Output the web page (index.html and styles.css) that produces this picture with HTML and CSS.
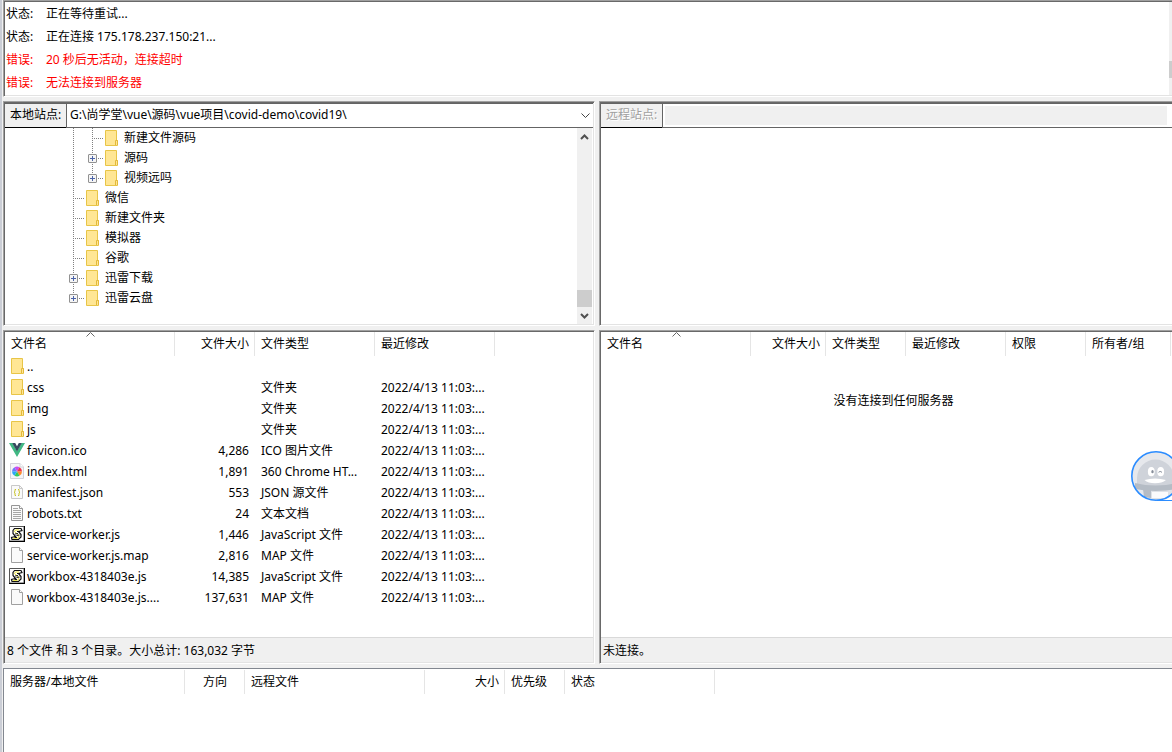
FILE: index.html
```html
<!DOCTYPE html>
<html lang="zh-CN">

<head>
  <meta charset="UTF-8">
  <meta name="viewport" content="width=device-width, initial-scale=1.0">
  <title>FTP</title>
  <link rel="stylesheet" href="styles.css">
</head>

<body>
  <!-- shared icons -->
  <svg class="sprite" aria-hidden="true">
    <symbol id="folder" viewBox="0 0 13 16">
      <path d="M0.500 0.500H11.500V10.500H12.500V15.500H0.500Z" fill="#ffe694" stroke="#e8c547"/>
      <path d="M10.500 15V10.500H12.500V15" fill="#ffe694" stroke="#e3b93a"/>
    </symbol>
    <symbol id="vue" viewBox="0 0 16 16">
      <path d="M0 1H3.500L8 9L12.500 1H16L8 15Z" fill="#41b883"/>
      <path d="M3.200 1H6.200L8 4.200L9.800 1H12.800L8 9.600Z" fill="#35495e"/>
    </symbol>
    <symbol id="page" viewBox="0 0 16 16">
      <path d="M2.500 0.500H10.500L13.500 3.500V15.500H2.500Z" fill="#fafafa" stroke="#a0a0a0"/>
      <path d="M10.500 0.500V3.500H13.500" fill="#fff" stroke="#a0a0a0"/>
    </symbol>
    <symbol id="html" viewBox="0 0 16 16">
      <path d="M1.500 0.500H11L14.500 4V15.500H1.500Z" fill="#f5f5f8" stroke="#d3d3da"/>
      <path d="M11 0.500V4H14.500" fill="#fff" stroke="#d3d3da"/>
      <path d="M8 8.500L3 8.500A5 5 0 0 1 5.500 4.200Z" fill="#6a7cf5"/>
      <path d="M8 8.500L5.500 4.200A5 5 0 0 1 10.500 4.200Z" fill="#c94df0"/>
      <path d="M8 8.500L10.500 4.200A5 5 0 0 1 13 8.500Z" fill="#f2334a"/>
      <path d="M8 8.500H13A5 5 0 0 1 10.500 12.800Z" fill="#ff8a2b"/>
      <path d="M8 8.500L10.500 12.800A5 5 0 0 1 5.500 12.800Z" fill="#35c95a"/>
      <path d="M8 8.500L5.500 12.800A5 5 0 0 1 3 8.500Z" fill="#2ba8f5"/>
    </symbol>
    <symbol id="json" viewBox="0 0 16 16">
      <path d="M2.500 1.500H10.500L13.500 4.500V14.500H2.500Z" fill="#fafafa" stroke="#c9c9c9"/>
      <path d="M10.500 1.500V4.500H13.500" fill="none" stroke="#c9c9c9"/>
      <path d="M7 5.500H6V7.500L5 8.200L6 9V11.500H7M9 5.500H10V7.500L11 8.200L10 9V11.500H9" fill="none" stroke="#c9c42c"/>
    </symbol>
    <symbol id="txt" viewBox="0 0 16 16">
      <path d="M2.500 0.500H10.500L13.500 3.500V15.500H2.500Z" fill="#fafafa" stroke="#969696"/>
      <path d="M10.500 0.500V3.500H13.500" fill="#fff" stroke="#969696"/>
      <path d="M4 3.500H9M4 5.500H12M4 7.500H12M4 9.500H12M4 11.500H12M4 13.500H12" stroke="#a6a6a6"/>
    </symbol>
    <symbol id="js" viewBox="0 0 16 16">
      <path d="M0.500 0.500H15V15H0.500Z" fill="#fff" stroke="#555"/>
      <path d="M15.500 0V16M0 15.500H16" stroke="#000"/>
      <path d="M5.500 2.500H12L13 4.500L9.500 5.500L12 8.500V11L9.500 13.500H3L2.500 11.500L6.500 10.500L4 7.500V4.500Z" fill="#fff" stroke="#111" stroke-width="1.200"/>
      <path d="M10 4H6.500L5.500 5.500L10 9.500L9.500 11.500L8 12.300H4" fill="none" stroke="#e6de2a"/>
      <path d="M8 5.500H11M6 8L9 7.500M7.500 9.500L10.500 9M5.500 11.500H8" stroke="#111"/>
    </symbol>
  </svg>

  <main class="app">
    <section class="panel panel-open log">
      <ul class="log-list">
        <li><span class="log-type">状态:</span><span>正在等待重试...</span></li>
        <li><span class="log-type">状态:</span><span>正在连接 175.178.237.150:21...</span></li>
        <li class="error"><span class="log-type">错误:</span><span>20 秒后无活动，连接超时</span></li>
        <li class="error"><span class="log-type">错误:</span><span>无法连接到服务器</span></li>
      </ul>
      <div class="log-scroll"><div class="thumb"></div></div>
    </section>

    <div class="columns">
      <section class="panel site">
        <div class="site-bar">
          <label for="local-path">本地站点:</label>
          <div class="combo">
            <select id="local-path">
              <option>G:\尚学堂\vue\源码\vue项目\covid-demo\covid19\</option>
            </select>
            <svg class="combo-arrow" width="9" height="6" viewBox="0 0 9 6"><path d="M0.500 0.500L4.500 4.500L8.500 0.500" fill="none" stroke="#444"/></svg>
          </div>
        </div>
        <div class="tree-box">
          <ul class="tree">
            <li><span class="guide line"></span><span class="guide line elbow"></span><svg class="folder"><use href="#folder"/></svg>新建文件源码</li>
            <li><span class="guide line"></span><span class="guide line elbow"><button class="expand" aria-label="展开"></button></span><svg class="folder"><use href="#folder"/></svg>源码</li>
            <li><span class="guide line"></span><span class="guide line elbow end"><button class="expand" aria-label="展开"></button></span><svg class="folder"><use href="#folder"/></svg>视频远吗</li>
            <li><span class="guide line elbow"></span><svg class="folder"><use href="#folder"/></svg>微信</li>
            <li><span class="guide line elbow"></span><svg class="folder"><use href="#folder"/></svg>新建文件夹</li>
            <li><span class="guide line elbow"></span><svg class="folder"><use href="#folder"/></svg>模拟器</li>
            <li><span class="guide line elbow"></span><svg class="folder"><use href="#folder"/></svg>谷歌</li>
            <li><span class="guide line elbow"><button class="expand" aria-label="展开"></button></span><svg class="folder"><use href="#folder"/></svg>迅雷下载</li>
            <li><span class="guide line elbow end"><button class="expand" aria-label="展开"></button></span><svg class="folder"><use href="#folder"/></svg>迅雷云盘</li>
          </ul>
          <div class="scrollbar">
            <svg width="9" height="7" viewBox="0 0 9 7"><path d="M1 5L4.500 1.500L8 5" fill="none" stroke="#505050" stroke-width="2"/></svg>
            <div class="thumb"></div>
            <svg width="9" height="7" viewBox="0 0 9 7"><path d="M1 2L4.500 5.500L8 2" fill="none" stroke="#505050" stroke-width="2"/></svg>
          </div>
        </div>
      </section>

      <section class="panel panel-open site">
        <div class="site-bar disabled">
          <label for="remote-path">远程站点:</label>
          <div class="combo">
            <select id="remote-path" disabled></select>
          </div>
        </div>
      </section>
    </div>

    <div class="columns">
      <section class="panel files">
        <div class="list">
          <table class="local-table">
            <colgroup><col class="w170"><col class="w80"><col class="w120"><col class="w120"></colgroup>
            <thead>
              <tr>
                <th>文件名<svg class="sort" width="9" height="5" viewBox="0 0 9 5"><path d="M0.500 4.500L4.500 0.500L8.500 4.500" fill="none" stroke="#666"/></svg></th>
                <th class="num">文件大小</th>
                <th>文件类型</th>
                <th>最近修改</th>
              </tr>
            </thead>
            <tbody>
              <tr><td><div class="name"><svg class="folder"><use href="#folder"/></svg>..</div></td><td></td><td></td><td></td></tr>
              <tr><td><div class="name"><svg class="folder"><use href="#folder"/></svg>css</div></td><td></td><td>文件夹</td><td>2022/4/13 11:03:...</td></tr>
              <tr><td><div class="name"><svg class="folder"><use href="#folder"/></svg>img</div></td><td></td><td>文件夹</td><td>2022/4/13 11:03:...</td></tr>
              <tr><td><div class="name"><svg class="folder"><use href="#folder"/></svg>js</div></td><td></td><td>文件夹</td><td>2022/4/13 11:03:...</td></tr>
              <tr><td><div class="name"><svg class="icon"><use href="#vue"/></svg>favicon.ico</div></td><td class="num">4,286</td><td>ICO 图片文件</td><td>2022/4/13 11:03:...</td></tr>
              <tr><td><div class="name"><svg class="icon"><use href="#html"/></svg>index.html</div></td><td class="num">1,891</td><td>360 Chrome HT...</td><td>2022/4/13 11:03:...</td></tr>
              <tr><td><div class="name"><svg class="icon"><use href="#json"/></svg>manifest.json</div></td><td class="num">553</td><td>JSON 源文件</td><td>2022/4/13 11:03:...</td></tr>
              <tr><td><div class="name"><svg class="icon"><use href="#txt"/></svg>robots.txt</div></td><td class="num">24</td><td>文本文档</td><td>2022/4/13 11:03:...</td></tr>
              <tr><td><div class="name"><svg class="icon"><use href="#js"/></svg>service-worker.js</div></td><td class="num">1,446</td><td>JavaScript 文件</td><td>2022/4/13 11:03:...</td></tr>
              <tr><td><div class="name"><svg class="icon"><use href="#page"/></svg>service-worker.js.map</div></td><td class="num">2,816</td><td>MAP 文件</td><td>2022/4/13 11:03:...</td></tr>
              <tr><td><div class="name"><svg class="icon"><use href="#js"/></svg>workbox-4318403e.js</div></td><td class="num">14,385</td><td>JavaScript 文件</td><td>2022/4/13 11:03:...</td></tr>
              <tr><td><div class="name"><svg class="icon"><use href="#page"/></svg>workbox-4318403e.js....</div></td><td class="num">137,631</td><td>MAP 文件</td><td>2022/4/13 11:03:...</td></tr>
            </tbody>
          </table>
        </div>
        <div class="status">8 个文件 和 3 个目录。大小总计: 163,032 字节</div>
      </section>

      <section class="panel panel-open files">
        <div class="list">
          <table class="remote-table">
            <colgroup><col class="w150"><col class="w75"><col class="w80"><col class="w100"><col class="w80"><col class="w85"><col></colgroup>
            <thead>
              <tr>
                <th>文件名<svg class="sort" width="9" height="5" viewBox="0 0 9 5"><path d="M0.500 4.500L4.500 0.500L8.500 4.500" fill="none" stroke="#666"/></svg></th>
                <th class="num">文件大小</th>
                <th>文件类型</th>
                <th>最近修改</th>
                <th>权限</th>
                <th>所有者/组</th>
                <td></td>
              </tr>
            </thead>
            <tbody>
              <tr><td class="empty" colspan="7">没有连接到任何服务器</td></tr>
            </tbody>
          </table>
        </div>
        <div class="status">未连接。</div>
      </section>
    </div>

    <section class="queue">
      <table class="queue-table">
        <colgroup><col class="w181"><col class="w60"><col class="w180"><col class="w80"><col class="w60"><col class="w150"></colgroup>
        <thead>
          <tr>
            <th>服务器/本地文件</th>
            <th class="center">方向</th>
            <th>远程文件</th>
            <th class="num">大小</th>
            <th>优先级</th>
            <th>状态</th>
          </tr>
        </thead>
      </table>
    </section>
  </main>

  <!-- floating assistant, hangs over the right edge -->
  <button class="assistant" aria-label="助手">
    <svg width="50" height="50" viewBox="0 0 50 50">
      <defs><clipPath id="round"><circle cx="25" cy="25" r="24"/></clipPath></defs>
      <g clip-path="url(#round)">
        <rect width="50" height="50" fill="#e6e8ec"/>
        <path d="M6 36V27A18 18 0 0 1 43 27V36Z" fill="#cfd3da"/>
        <path d="M15 38H46V50H15Z" fill="#dfe2e7"/>
        <path d="M21 41H37V47H21Z" fill="#fbfbfc"/>
        <path d="M4 32Q24 37 46 32V38Q24 42 4 38Z" fill="#b5bcc5"/>
        <path d="M12 38H20V47L13 46Z" fill="#b5bcc5"/>
        <ellipse cx="20.300" cy="20.700" rx="3.400" ry="4.600" fill="#fff"/>
        <ellipse cx="29.700" cy="20.700" rx="3.400" ry="4.600" fill="#fff"/>
        <ellipse cx="21.500" cy="20.700" rx="1.200" ry="1.600" fill="#868d99"/>
        <path d="M27.500 21.300Q29 19.500 31 21.300" fill="none" stroke="#868d99"/>
        <path d="M13.500 29Q24 26 35 29Q31 32.300 24 32.300Q17 32.300 13.500 29Z" fill="#fff"/>
      </g>
      <circle cx="25" cy="25" r="24.200" fill="none" stroke="#2b8cff" stroke-width="1.600"/>
      <path d="M26 49.500H50" stroke="#2b8cff"/>
    </svg>
  </button>
</body>
</html>
```
FILE: styles.css
```css
* {
  box-sizing: border-box;
}
body {
  margin: 0;
  height: 100vh;
  overflow: hidden;
  background-color: #f0f0f0;
  color: #000;
  font-family: "Noto Sans", "Noto Sans CJK SC", sans-serif;
  font-size: 12px;
  line-height: 20px;
}
ul {
  margin: 0;
  padding: 0;
  list-style: none;
}
.sprite {
  display: none;
}
.app {
  display: grid;
  grid-template-rows: auto auto minmax(0, 4fr) minmax(0, 1fr);
  gap: 4px;
  height: 100%;
  border-left: 2px solid #cbced6;
  padding-left: 1px;
}
.columns {
  display: grid;
  grid-template-columns: minmax(0, 592fr) minmax(0, 573fr);
  gap: 4px;
}

/* sunken frame around every pane */
.panel {
  background-color: #fff;
  border: 1px solid #fff;
  border-top-color: #a0a0a0;
  border-left-color: #a0a0a0;
  padding: 1px;
  box-shadow: inset 1px 1px #696969, inset -1px -1px #e3e3e3;
}
.panel-open {
  border-right: 0;
  padding-right: 0;
  box-shadow: inset 1px 1px #696969, inset 0 -1px #e3e3e3;
}
.thumb {
  background-color: #cdcdcd;
  height: 17px;
}

/* log */
.log {
  display: flex;
}
.log-list {
  flex: 1;
  padding: 0 1px 1px;
}
.log-list li {
  display: flex;
  line-height: 23px;
}
.log-type {
  width: 40px;
}
.error {
  color: #f00;
}
.log-scroll {
  width: 3px;
  padding-top: 59px;
  background-color: #f0f0f0;
}

/* site bar */
.site {
  display: flex;
  flex-direction: column;
}
.site-bar {
  display: flex;
  height: 25px;
}
.site-bar label {
  width: 61px;
  padding-left: 5px;
  background-color: #f0f0f0;
  border-top: 1px solid #646464;
  border-bottom: 1px solid #000;
  line-height: 22px;
  white-space: nowrap;
}
.combo {
  position: relative;
  flex: 1;
  display: flex;
}
.combo select {
  appearance: none;
  flex: 1;
  min-width: 0;
  margin: 0;
  padding: 0 20px 1px 3px;
  border: 1px solid #646464;
  border-right: 0;
  border-radius: 0;
  background-color: #fff;
  color: #000;
  font: inherit;
}
.combo-arrow {
  position: absolute;
  right: 3px;
  top: 10px;
  pointer-events: none;
}
.disabled label {
  color: #a0a0a0;
  text-shadow: 1px 1px #fff;
}
.disabled select {
  padding: 2px 5px 2px 2px;
  background: linear-gradient(#f0f0f0, #f0f0f0) content-box, #fff;
  opacity: 1;
}

/* directory tree */
.tree-box {
  display: flex;
  flex: 1;
}
.tree {
  flex: 1;
  padding: 0 0 16px 62px;
}
.tree li {
  display: flex;
  height: 20px;
}
.guide {
  width: 19px;
  height: 20px;
  background-repeat: no-repeat;
}
.line {
  background-image: repeating-linear-gradient(#808080 0 1px, transparent 1px 2px);
  background-size: 1px 20px;
  background-position: 6px 0;
}
.elbow {
  background-image: repeating-linear-gradient(#808080 0 1px, transparent 1px 2px), repeating-linear-gradient(90deg, #808080 0 1px, transparent 1px 2px);
  background-size: 1px 20px, 11px 1px;
  background-position: 6px 0, 6px 10px;
}
.end {
  background-size: 1px 10px, 11px 1px;
}
.expand {
  display: block;
  width: 9px;
  height: 9px;
  margin: 6px 0 0 2px;
  padding: 0;
  border: 1px solid #919191;
  border-radius: 1px;
  background: linear-gradient(#4b63a7, #4b63a7) center / 5px 1px no-repeat, linear-gradient(#4b63a7, #4b63a7) center / 1px 5px no-repeat, #f5f5f5;
}
.folder {
  width: 13px;
  height: 16px;
}
.tree .folder {
  margin: 2px 6px 0 0;
}
.scrollbar {
  display: flex;
  flex-direction: column;
  align-items: center;
  width: 15px;
  margin-right: 1px;
  padding: 6px 0 5px;
  background-color: #f0f0f0;
}
.scrollbar .thumb {
  width: 100%;
  margin: auto 0 5px;
}

/* file lists */
.files {
  display: flex;
  flex-direction: column;
}
.list {
  flex: 1;
  min-height: 0;
  overflow: hidden;
}
table {
  table-layout: fixed;
  border-collapse: separate;
  border-spacing: 0;
}
.local-table {
  width: 490px;
}
.remote-table {
  width: 585px;
}
.queue-table {
  width: 711px;
}
.w60 {
  width: 60px;
}
.w75 {
  width: 75px;
}
.w80 {
  width: 80px;
}
.w85 {
  width: 85px;
}
.w100 {
  width: 100px;
}
.w120 {
  width: 120px;
}
.w150 {
  width: 150px;
}
.w170 {
  width: 170px;
}
.w180 {
  width: 180px;
}
.w181 {
  width: 181px;
}
th {
  position: relative;
  height: 24px;
  padding: 0 5px 0 6px;
  border-right: 1px solid #e5e5e5;
  font-weight: normal;
  text-align: left;
  white-space: nowrap;
}
td {
  height: 21px;
  padding: 0 6px;
  line-height: 21px;
  white-space: nowrap;
}
.num {
  text-align: right;
}
.center {
  text-align: center;
}
.sort {
  position: absolute;
  left: 50%;
  top: 0;
  margin-left: -4px;
}
.name {
  display: flex;
  align-items: center;
  margin-left: -2px;
}
.name .folder {
  margin: 0 3px 1px 2px;
}
.icon {
  width: 16px;
  height: 16px;
  margin: 0 2px 1px 0;
}
.empty {
  padding-top: 34px;
  text-align: center;
}
.status {
  height: 25px;
  padding-left: 2px;
  background-color: #f0f0f0;
  border-top: 1px solid #d9d9d9;
  line-height: 26px;
}

/* transfer queue */
.queue {
  padding-top: 1px;
  background-color: #fff;
  border-top: 1px solid #828790;
  border-left: 1px solid #828790;
  overflow: hidden;
}

.assistant {
  position: fixed;
  right: -9px;
  top: 451px;
  padding: 0;
  border: 0;
  background: none;
}
.assistant svg {
  display: block;
}
```
